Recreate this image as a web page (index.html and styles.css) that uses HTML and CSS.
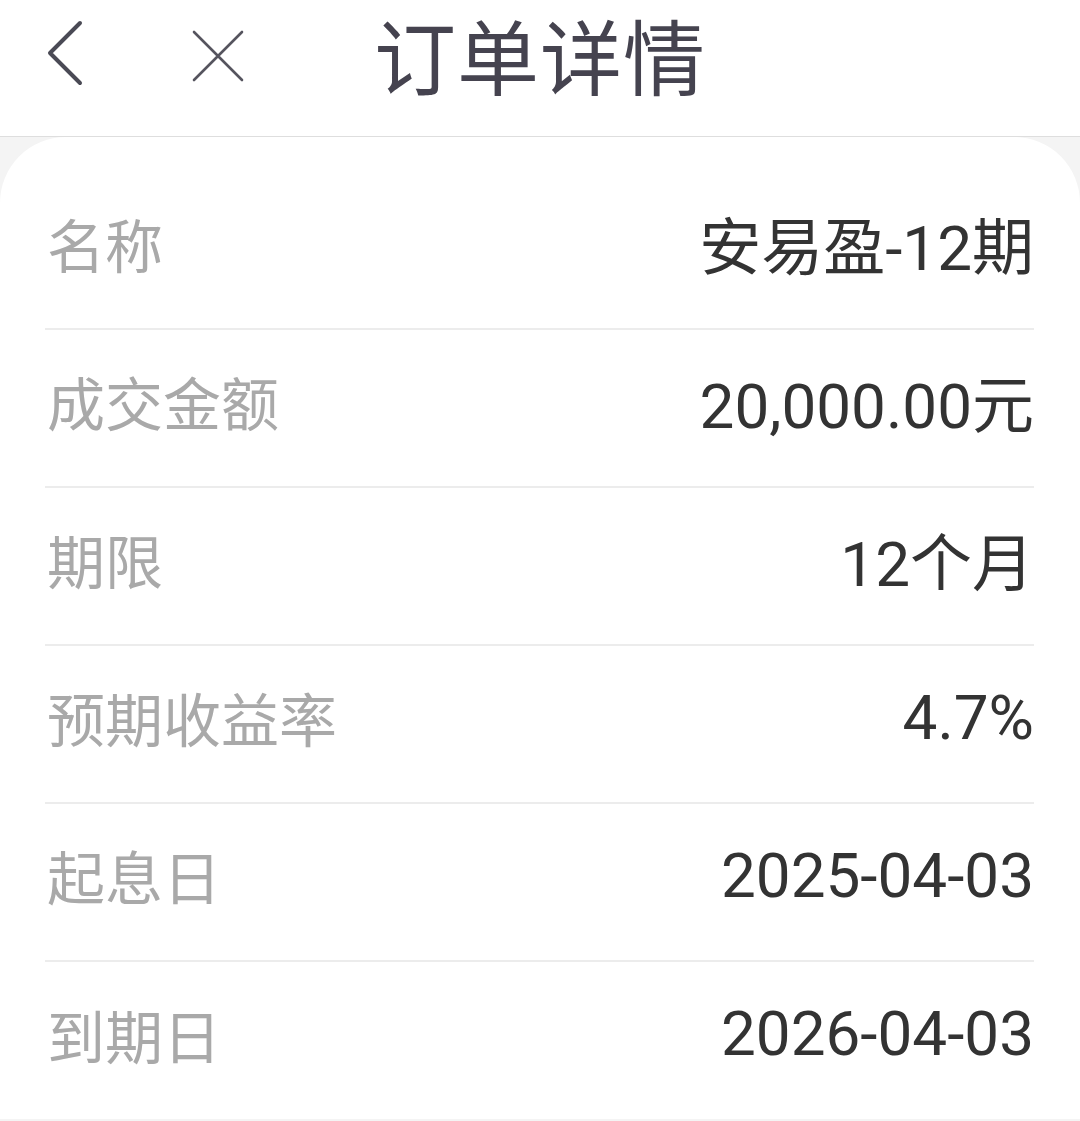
FILE: index.html
```html
<!DOCTYPE html>
<html lang="zh-CN">
<head>
    <meta charset="UTF-8">
    <meta name="viewport" content="width=device-width, initial-scale=1.0">
    <title>订单详情</title>
    <link rel="stylesheet" href="styles.css">
</head>
<body>
    <header class="topbar">
        <div class="nav-left">
            <span class="icon-btn back">
                <svg width="40" height="70" viewBox="0 0 40 70">
                    <polyline points="34,3 4,33 34,63" fill="none" stroke="#4a4a55" stroke-width="4" stroke-linecap="round" stroke-linejoin="round"/>
                </svg>
            </span>
            <span class="icon-btn close">
                <svg width="52" height="52" viewBox="0 0 52 52">
                    <path d="M2 2 L50 50 M50 2 L2 50" fill="none" stroke="#55545e" stroke-width="2.6" stroke-linecap="round"/>
                </svg>
            </span>
        </div>
        <h1 class="title">订单详情</h1>
    </header>

    <main class="page">
        <div class="card">
            <div class="row"><span class="label">名称</span><span class="value">安易盈-12期</span></div>
            <div class="row"><span class="label">成交金额</span><span class="value">20,000.00元</span></div>
            <div class="row"><span class="label">期限</span><span class="value">12个月</span></div>
            <div class="row"><span class="label">预期收益率</span><span class="value">4.7%</span></div>
            <div class="row"><span class="label">起息日</span><span class="value">2025-04-03</span></div>
            <div class="row"><span class="label">到期日</span><span class="value">2026-04-03</span></div>
        </div>
    </main>
</body>
</html>
```

FILE: styles.css
```css
* {
    box-sizing: border-box;
}
body {
    margin: 0;
    font-family: Roboto, "Noto Sans CJK SC", sans-serif;
    background-color: #f4f4f4;
    height: 1121px;
    overflow: hidden;
}
.topbar {
    position: relative;
    height: 137px;
    background-color: #fff;
    border-bottom: 1px solid #dedede;
    display: flex;
    align-items: center;
    justify-content: center;
}
.nav-left {
    position: absolute;
    left: 46px;
    top: 20px;
    display: flex;
    align-items: center;
    gap: 106px;
}
.icon-btn {
    display: flex;
}
.icon-btn.close {
    margin-top: 2px;
}
.title {
    margin: 0 0 30px;
    font-size: 82px;
    font-weight: 400;
    color: #45434f;
    letter-spacing: 1px;
}
.page {
    padding-bottom: 4px;
}
.card {
    background-color: #fff;
    border-radius: 66px 66px 0 0;
    padding: 35px 46px 0 45px;
}
.row {
    height: 158px;
    display: flex;
    align-items: center;
    justify-content: space-between;
    border-bottom: 2px solid #ececec;
    padding-bottom: 14px;
}
.row:last-child {
    border-bottom: none;
    height: 157px;
}
.label {
    font-size: 58px;
    color: #a9a9a9;
    padding-left: 2px;
}
.value {
    font-size: 62px;
    color: #333;
}
```
